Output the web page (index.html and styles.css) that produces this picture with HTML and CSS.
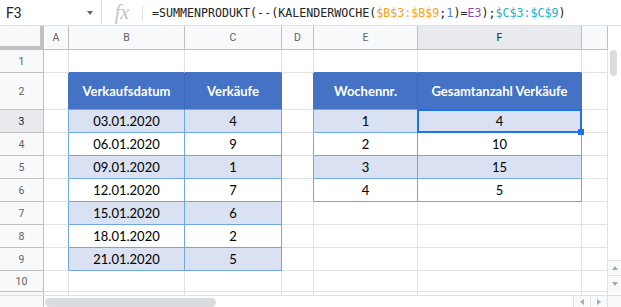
FILE: index.html
```html
<!DOCTYPE html>
<html>
<head>
    <title>Gesamtanzahl Verkäufe pro Woche</title>
    <link rel="stylesheet" href="styles.css">
</head>
<body>
    <div class="formula-bar">
        <div class="name-box">
            <span>F3</span>
            <span class="caret"></span>
        </div>
        <div class="fx">fx</div>
        <div class="sep"></div>
        <div class="formula">=SUMMENPRODUKT(--(KALENDERWOCHE(<span class="r1">$B$3:$B$9</span>;<span class="num">1</span>)=<span class="r2">E3</span>);<span class="r3">$C$3:$C$9</span>)</div>
    </div>

    <div class="sheet">
        <div class="grid">
            <!-- column headers -->
            <div class="corner"></div>
            <div class="ch">A</div>
            <div class="ch">B</div>
            <div class="ch">C</div>
            <div class="ch">D</div>
            <div class="ch">E</div>
            <div class="ch on">F</div>
            <div class="ch"></div>

            <!-- row 1 -->
            <div class="rh">1</div>
            <div class="c"></div>
            <div class="c tt"></div>
            <div class="c tt"></div>
            <div class="c"></div>
            <div class="c tt"></div>
            <div class="c tt"></div>
            <div class="c"></div>

            <!-- row 2 -->
            <div class="rh">2</div>
            <div class="c tlh"></div>
            <div class="c hd">Verkaufsdatum</div>
            <div class="c hd end">Verkäufe</div>
            <div class="c tlh"></div>
            <div class="c hd">Wochennr.</div>
            <div class="c hd end">Gesamtanzahl Verkäufe</div>
            <div class="c"></div>

            <!-- row 3 -->
            <div class="rh on">3</div>
            <div class="c tld"></div>
            <div class="c d b">03.01.2020</div>
            <div class="c d b">4</div>
            <div class="c tld"></div>
            <div class="c d b">1</div>
            <div class="c d b sel">4</div>
            <div class="c"></div>

            <!-- row 4 -->
            <div class="rh">4</div>
            <div class="c tld"></div>
            <div class="c d">06.01.2020</div>
            <div class="c d">9</div>
            <div class="c tld"></div>
            <div class="c d">2</div>
            <div class="c d">10</div>
            <div class="c"></div>

            <!-- row 5 -->
            <div class="rh">5</div>
            <div class="c tld"></div>
            <div class="c d b">09.01.2020</div>
            <div class="c d b">1</div>
            <div class="c tld"></div>
            <div class="c d b">3</div>
            <div class="c d b">15</div>
            <div class="c"></div>

            <!-- row 6 -->
            <div class="rh">6</div>
            <div class="c tld"></div>
            <div class="c d">12.01.2020</div>
            <div class="c d">7</div>
            <div class="c tld"></div>
            <div class="c d">4</div>
            <div class="c d">5</div>
            <div class="c"></div>

            <!-- row 7 -->
            <div class="rh">7</div>
            <div class="c tld"></div>
            <div class="c d b">15.01.2020</div>
            <div class="c d b">6</div>
            <div class="c"></div>
            <div class="c"></div>
            <div class="c"></div>
            <div class="c"></div>

            <!-- row 8 -->
            <div class="rh">8</div>
            <div class="c tld"></div>
            <div class="c d">18.01.2020</div>
            <div class="c d">2</div>
            <div class="c"></div>
            <div class="c"></div>
            <div class="c"></div>
            <div class="c"></div>

            <!-- row 9 -->
            <div class="rh">9</div>
            <div class="c tld"></div>
            <div class="c d b">21.01.2020</div>
            <div class="c d b">5</div>
            <div class="c"></div>
            <div class="c"></div>
            <div class="c"></div>
            <div class="c"></div>

            <!-- row 10 -->
            <div class="rh">10</div>
            <div class="c"></div>
            <div class="c"></div>
            <div class="c"></div>
            <div class="c"></div>
            <div class="c"></div>
            <div class="c"></div>
            <div class="c"></div>

            <!-- row 11 (cut off) -->
            <div class="rh"></div>
            <div class="c"></div>
            <div class="c"></div>
            <div class="c"></div>
            <div class="c"></div>
            <div class="c"></div>
            <div class="c"></div>
            <div class="c"></div>
        </div>

        <div class="vscroll">
            <div class="vthumb"></div>
            <div class="vbtn"><span class="tri up"></span></div>
            <div class="vbtn"><span class="tri down"></span></div>
        </div>
    </div>

    <div class="hscroll">
        <div class="hleft"></div>
        <div class="htrack">
            <div class="hthumb"></div>
        </div>
        <div class="hbtn"><span class="tri left"></span></div>
        <div class="hbtn"><span class="tri right"></span></div>
        <div class="hcorner"></div>
    </div>
</body>
</html>
```

FILE: styles.css
```css
body {
    margin: 0;
    width: 621px;
    height: 307px;
    overflow: hidden;
    background: #fff;
    font-family: Roboto, "Liberation Sans", sans-serif;
}

/* formula bar */
.formula-bar {
    display: flex;
    align-items: center;
    height: 25px;
    border-bottom: 1px solid #e0e0e0;
}
.name-box {
    display: flex;
    align-items: center;
    justify-content: space-between;
    box-sizing: border-box;
    width: 102px;
    height: 25px;
    padding: 0 8px 0 6px;
    border-right: 1px solid #e0e0e0;
    font-size: 14px;
    color: #222;
}
.caret {
    width: 0;
    height: 0;
    border-left: 3.5px solid transparent;
    border-right: 3.5px solid transparent;
    border-top: 4px solid #666;
}
.fx {
    width: 40px;
    text-align: center;
    font-family: "Liberation Serif", serif;
    font-style: italic;
    font-size: 20px;
    color: #c4c4c4;
}
.sep {
    width: 1px;
    height: 15px;
    background: #e0e0e0;
    margin-right: 9px;
}
.formula {
    font-family: "DejaVu Sans Mono", monospace;
    font-size: 11.65px;
    color: #222;
    white-space: nowrap;
}
.r1 { color: #f6a124; }
.num { color: #4a86e8; }
.r2 { color: #8e4ab0; }
.r3 { color: #22b0d0; }

/* sheet */
.sheet {
    display: flex;
    height: 269px;
    overflow: hidden;
}
.grid {
    display: grid;
    grid-template-columns: 44px 25px 116px 97px 32px 104px 164px 26px;
    grid-template-rows: 24px 23px 37px repeat(7, 23px) 21px 21px;
    width: 608px;
}
.grid > div {
    box-sizing: border-box;
}
.corner {
    background: #f8f9fa;
    border-right: 4px solid #c0c0c0;
    border-bottom: 4px solid #c0c0c0;
}
.ch, .rh {
    display: flex;
    align-items: center;
    justify-content: center;
    background: #f8f9fa;
    border-right: 1px solid #c0c0c0;
    border-bottom: 1px solid #c0c0c0;
    font-size: 10.5px;
    color: #5f6368;
}
.ch.on, .rh.on {
    background: #e8eaed;
    color: #202124;
}
.c {
    display: flex;
    align-items: center;
    justify-content: center;
    border-right: 1px solid #e2e2e2;
    border-bottom: 1px solid #e2e2e2;
    font-family: Lato, "Noto Sans", sans-serif;
    font-size: 13px;
    color: #000;
}
.tt { border-bottom-color: #4472c4; }
.tlh { border-right-color: #4472c4; }
.tld { border-right-color: #6fa8dc; }
.hd {
    background: #4472c4;
    color: #fff;
    font-weight: 700;
    border-right-color: #3d66b3;
    border-bottom-color: #6fa8dc;
}
.hd.end { border-right-color: #4472c4; }
.d {
    border-right-color: #6fa8dc;
    border-bottom-color: #6fa8dc;
}
.b { background: #d9e1f2; }

/* active cell */
.sel {
    position: relative;
}
.sel::before {
    content: "";
    position: absolute;
    inset: -1px;
    border: 2px solid #1a73e8;
}
.sel::after {
    content: "";
    position: absolute;
    right: -3px;
    bottom: -3px;
    width: 6px;
    height: 6px;
    background: #1a73e8;
}

/* scrollbars */
.vscroll {
    display: flex;
    flex-direction: column;
    width: 13px;
    padding-top: 24px;
    box-sizing: border-box;
}
.vthumb {
    width: 7px;
    height: 26px;
    margin: 0 0 auto 2px;
    border-radius: 4px;
    background: #dadce0;
}
.vbtn {
    display: flex;
    align-items: center;
    justify-content: center;
    height: 14px;
    border-top: 1px solid #e0e0e0;
    background: #f8f9fa;
}
.vbtn:last-child {
    height: 16px;
    margin-bottom: 3px;
}
.hscroll {
    display: flex;
    height: 12px;
    border-top: 1px solid #e0e0e0;
}
.hleft {
    width: 44px;
    box-sizing: border-box;
    background: #f8f9fa;
    border-right: 1px solid #c0c0c0;
}
.htrack {
    flex: 1;
    padding: 2px 0 0 1px;
}
.hthumb {
    width: 171px;
    height: 9px;
    border-radius: 5px;
    background: #dadce0;
}
.hbtn {
    display: flex;
    align-items: center;
    justify-content: center;
    width: 16px;
    border-left: 1px solid #e0e0e0;
    background: #f8f9fa;
}
.hcorner {
    width: 13px;
    border-left: 1px solid #e0e0e0;
    background: #f8f9fa;
}
.tri {
    width: 0;
    height: 0;
}
.tri.up {
    border-left: 3.5px solid transparent;
    border-right: 3.5px solid transparent;
    border-bottom: 4px solid #aaa;
}
.tri.down {
    border-left: 3.5px solid transparent;
    border-right: 3.5px solid transparent;
    border-top: 4px solid #aaa;
}
.tri.left {
    border-top: 3.5px solid transparent;
    border-bottom: 3.5px solid transparent;
    border-right: 4px solid #aaa;
}
.tri.right {
    border-top: 3.5px solid transparent;
    border-bottom: 3.5px solid transparent;
    border-left: 4px solid #aaa;
}
```
